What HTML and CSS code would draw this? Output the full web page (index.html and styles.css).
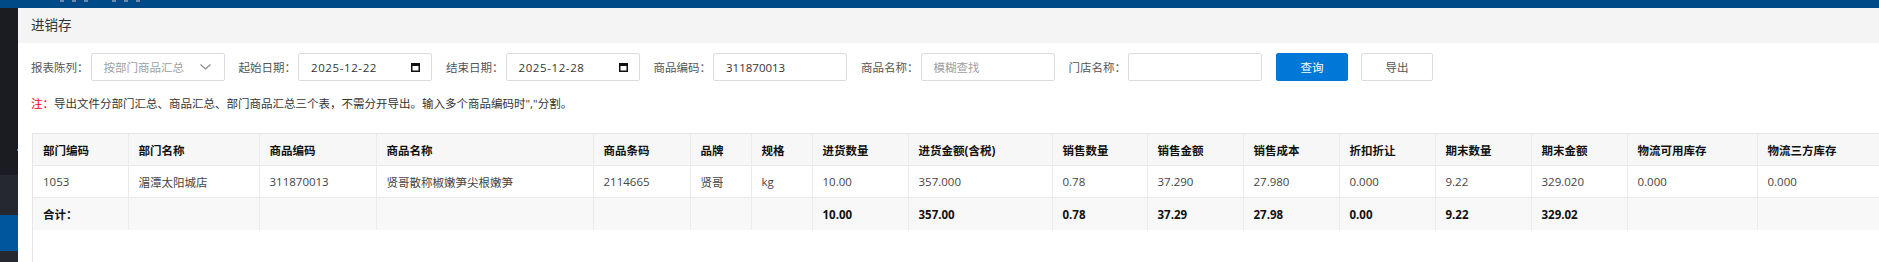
FILE: index.html
```html
<!DOCTYPE html>
<html lang="zh-CN">
<head>
    <meta charset="UTF-8">
    <meta name="viewport" content="width=device-width, initial-scale=1.0">
    <title>进销存</title>
    <link rel="stylesheet" href="styles.css">
</head>
<body>

<div class="topbar">
    <div class="logo-marks"><i></i><i></i><i></i><b></b><i></i><i></i><i></i></div>
</div>

<div class="layout">
    <aside class="sidebar">
        <div class="side-top"><span class="side-dot"></span></div>
        <div class="side-item"></div>
        <div class="side-item active"></div>
        <div class="side-item"></div>
    </aside>

    <main class="main">
        <div class="page-title">进销存</div>

        <div class="content">
            <div class="filters">
                <label>报表陈列：</label>
                <div class="field placeholder">
                    <span>按部门商品汇总</span>
                    <svg class="chevron" width="11" height="6" viewBox="0 0 11 6"><path d="M0.5 0.5 L5.5 5 L10.5 0.5" fill="none" stroke="#8a8a8a" stroke-width="1.2"/></svg>
                </div>

                <label>起始日期：</label>
                <div class="field date">
                    <span>2025-12-22</span>
                    <svg class="cal" width="9" height="9" viewBox="0 0 9 9"><rect x="0.75" y="0.75" width="7.5" height="7.5" fill="none" stroke="#111" stroke-width="1.5"/><rect x="0.5" y="0.5" width="8" height="2.5" fill="#111"/></svg>
                </div>

                <label>结束日期：</label>
                <div class="field date">
                    <span>2025-12-28</span>
                    <svg class="cal" width="9" height="9" viewBox="0 0 9 9"><rect x="0.75" y="0.75" width="7.5" height="7.5" fill="none" stroke="#111" stroke-width="1.5"/><rect x="0.5" y="0.5" width="8" height="2.5" fill="#111"/></svg>
                </div>

                <label>商品编码：</label>
                <div class="field"><span>311870013</span></div>

                <label>商品名称：</label>
                <div class="field placeholder"><span>模糊查找</span></div>

                <label>门店名称：</label>
                <div class="field"><span></span></div>

                <button class="btn btn-primary" type="button">查询</button>
                <button class="btn" type="button">导出</button>
            </div>

            <p class="note"><span class="note-mark">注：</span>导出文件分部门汇总、商品汇总、部门商品汇总三个表，不需分开导出。输入多个商品编码时","分割。</p>

            <div class="table-wrap">
                <table class="grid">
                    <colgroup>
                        <col><col><col><col><col><col><col><col><col>
                        <col><col><col><col><col><col><col><col>
                    </colgroup>
                    <thead>
                        <tr>
                            <th>部门编码</th>
                            <th>部门名称</th>
                            <th>商品编码</th>
                            <th>商品名称</th>
                            <th>商品条码</th>
                            <th>品牌</th>
                            <th>规格</th>
                            <th>进货数量</th>
                            <th>进货金额(含税)</th>
                            <th>销售数量</th>
                            <th>销售金额</th>
                            <th>销售成本</th>
                            <th>折扣折让</th>
                            <th>期末数量</th>
                            <th>期末金额</th>
                            <th>物流可用库存</th>
                            <th>物流三方库存</th>
                        </tr>
                    </thead>
                    <tbody>
                        <tr>
                            <td>1053</td>
                            <td>湄潭太阳城店</td>
                            <td>311870013</td>
                            <td>贤哥散称椒嫩笋尖根嫩笋</td>
                            <td>2114665</td>
                            <td>贤哥</td>
                            <td>kg</td>
                            <td>10.00</td>
                            <td>357.000</td>
                            <td>0.78</td>
                            <td>37.290</td>
                            <td>27.980</td>
                            <td>0.000</td>
                            <td>9.22</td>
                            <td>329.020</td>
                            <td>0.000</td>
                            <td>0.000</td>
                        </tr>
                        <tr class="total">
                            <td>合计：</td>
                            <td></td>
                            <td></td>
                            <td></td>
                            <td></td>
                            <td></td>
                            <td></td>
                            <td>10.00</td>
                            <td>357.00</td>
                            <td>0.78</td>
                            <td>37.29</td>
                            <td>27.98</td>
                            <td>0.00</td>
                            <td>9.22</td>
                            <td>329.02</td>
                            <td></td>
                            <td></td>
                        </tr>
                    </tbody>
                </table>
            </div>
        </div>
    </main>
</div>

</body>
</html>
```

FILE: styles.css
```css
html, body {
    margin: 0;
    padding: 0;
    height: 100%;
    overflow: hidden;
}

body {
    font-family: "Open Sans", "Noto Sans CJK SC", sans-serif;
    font-size: 11.5px;
    color: #333;
    background: #fff;
}

/* top blue strip */
.topbar {
    height: 8px;
    background-color: #004b87;
}

.logo-marks {
    display: flex;
    gap: 8px;
    padding-left: 60px;
}

.logo-marks i {
    display: block;
    width: 4px;
    height: 2px;
    background-color: #6f8aa6;
}

.logo-marks b {
    display: block;
    width: 8px;
}

.layout {
    display: flex;
    height: calc(100% - 8px);
}

/* left menu strip */
.sidebar {
    width: 18px;
    flex-shrink: 0;
    display: flex;
    flex-direction: column;
    overflow: hidden;
    background-color: #262830;
}

.sidebar > div {
    flex-shrink: 0;
}

.side-top {
    height: 167px;
    background-color: #1b1c21;
    display: flex;
    justify-content: flex-end;
    padding-top: 141px;
    box-sizing: border-box;
}

.side-dot {
    width: 1px;
    height: 2px;
    background-color: #5a6b92;
}

.side-item {
    height: 40px;
    background-color: #262830;
}

.side-item.active {
    height: 36px;
    background-color: #00569b;
}

.main {
    flex: 1;
    min-width: 0;
}

.page-title {
    height: 35px;
    line-height: 35px;
    padding-left: 13px;
    background-color: #f4f4f4;
    font-size: 13.5px;
    color: #333;
}

.content {
    padding: 10px 0 0 13px;
}

/* filter row */
.filters {
    display: flex;
    align-items: center;
    height: 28px;
    white-space: nowrap;
}

.filters label {
    color: #555;
    margin-right: 2px;
}

.field {
    width: 134px;
    height: 28px;
    box-sizing: border-box;
    border: 1px solid #dcdcdc;
    border-radius: 2px;
    margin-right: 14px;
    padding: 0 11px 0 12px;
    display: flex;
    align-items: center;
    justify-content: space-between;
    color: #333;
}

.field.placeholder {
    color: #a0a0a0;
}

.field.date span {
    letter-spacing: 0.6px;
}

.chevron {
    margin-right: 2px;
}

.btn {
    width: 72px;
    height: 28px;
    margin-right: 13px;
    border: 1px solid #dcdcdc;
    border-radius: 2px;
    background-color: #fff;
    color: #555;
    font-family: inherit;
    font-size: 11.5px;
    padding: 0;
    cursor: pointer;
}

.btn-primary {
    background-color: #0078d7;
    border-color: #0078d7;
    color: #fff;
}

.note {
    margin: 14px 0 0;
    line-height: 18px;
    color: #333;
}

.note-mark {
    color: #f00;
}

/* report table */
.table-wrap {
    margin: 20px 0 0 1px;
    height: 200px;
    border-left: 1px solid #e6e6e6;
    border-top: 1px solid #e6e6e6;
}

.grid {
    table-layout: fixed;
    width: 1864px;
    border-collapse: collapse;
}

.grid col:nth-child(1) { width: 95px; }
.grid col:nth-child(2) { width: 131px; }
.grid col:nth-child(3) { width: 117px; }
.grid col:nth-child(4) { width: 217px; }
.grid col:nth-child(5) { width: 97px; }
.grid col:nth-child(6) { width: 61px; }
.grid col:nth-child(7) { width: 61px; }
.grid col:nth-child(8) { width: 96px; }
.grid col:nth-child(9) { width: 144px; }
.grid col:nth-child(10) { width: 95px; }
.grid col:nth-child(11) { width: 96px; }
.grid col:nth-child(12) { width: 96px; }
.grid col:nth-child(13) { width: 96px; }
.grid col:nth-child(14) { width: 96px; }
.grid col:nth-child(15) { width: 96px; }
.grid col:nth-child(16) { width: 130px; }
.grid col:nth-child(17) { width: 140px; }

.grid th,
.grid td {
    height: 31px;
    padding: 0 10px;
    border: 1px solid #ebebeb;
    text-align: left;
    white-space: nowrap;
    overflow: hidden;
}

.grid th:first-child,
.grid td:first-child {
    border-left: 0;
}

.grid thead th {
    border-top: 0;
    background-color: #f7f7f7;
    color: #111;
    font-weight: bold;
}

.grid td {
    color: #444;
}

.grid .total td {
    background-color: #f8f8f8;
    color: #111;
    font-weight: bold;
    height: 32px;
    border-bottom: 0;
}
```
